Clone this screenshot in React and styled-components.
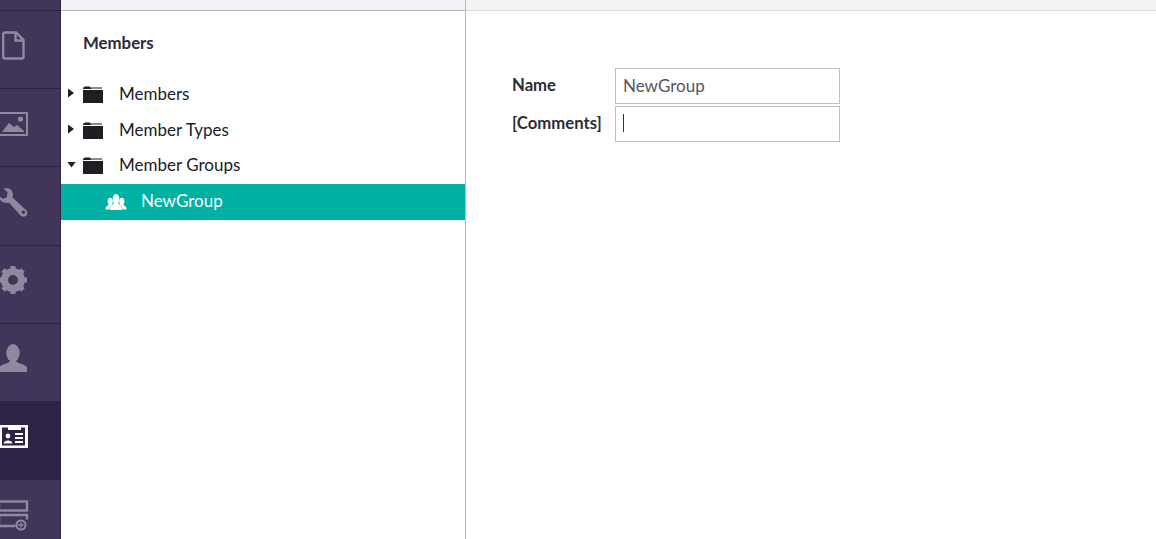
import React from 'react';
import styled, { createGlobalStyle } from 'styled-components';

const GlobalStyle = createGlobalStyle`
  html, body {
    margin: 0;
    padding: 0;
    height: 100%;
    overflow: hidden;
    background: #fff;
  }
  #root {
    height: 100%;
  }
`;

const Page = styled.div`
  display: flex;
  height: 539px;
  font-family: Lato, "Open Sans", sans-serif;
  color: #1b1b2b;
`;

const Sidebar = styled.nav`
  width: 60px;
  flex: none;
  background: #413659;
  border-right: 1px solid #2e2246;
  overflow: hidden;
`;

const SidebarStub = styled.div`
  height: 10px;
`;

// icons sit a bit above the middle of each tile
const SidebarItem = styled.div`
  height: 77.2px;
  box-sizing: content-box;
  border-top: 1px solid #2e2246;
  display: flex;
  align-items: center;
  padding-left: ${(p) => p.$left || 0}px;
  background: ${(p) => (p.$active ? '#2e2246' : 'transparent')};
  color: ${(p) => (p.$active ? '#fff' : '#8f89a0')};

  svg {
    margin-top: -8px;
    overflow: visible;
  }
`;

const TreePanel = styled.aside`
  width: 404px;
  flex: none;
  border-right: 1px solid #b8b6c0;
  display: flex;
  flex-direction: column;
`;

const TopStrip = styled.div`
  height: 10px;
  flex: none;
  background: #f3f3f5;
  border-bottom: 1px solid ${(p) => p.$line};
`;

const TreeTitle = styled.h2`
  margin: 0;
  padding: 22px 0 0 22px;
  font-size: 16.8px;
  line-height: 20px;
  font-weight: 700;
  color: #2b2b38;
`;

const Tree = styled.ul`
  list-style: none;
  margin: 22px 0 0;
  padding: 0;
`;

const TreeRow = styled.li`
  display: flex;
  align-items: center;
  height: ${(p) => p.$height}px;
  font-size: 17px;
  color: #1b1b2b;
`;

const Caret = styled.span`
  flex: none;
  background: #1f1f23;
  ${(p) =>
    p.$open
      ? `width: 9px;
         height: 6px;
         margin: 0 7px 0 6px;
         clip-path: polygon(0 0, 100% 0, 50% 100%);`
      : `width: 6px;
         height: 9px;
         margin: 0 9px 0 7px;
         clip-path: polygon(0 0, 100% 50%, 0 100%);`}
`;

const FolderIcon = styled.svg`
  width: 20px;
  height: 17px;
  flex: none;
  margin: 2px 16px 0 0;
`;

const ActiveRow = styled.div`
  display: flex;
  align-items: center;
  height: 36px;
  box-sizing: border-box;
  margin-top: 2px;
  padding: 0 0 3px 44px;
  background: #00b0a3;
  color: #fff;
  font-size: 17px;
`;

const GroupIcon = styled.svg`
  width: 22px;
  height: 18px;
  flex: none;
  margin: 3px 14px 0 0;
`;

const Main = styled.main`
  flex: 1;
  display: flex;
  flex-direction: column;
`;

const Form = styled.form`
  display: grid;
  grid-template-columns: 103px 225px;
  grid-auto-rows: 36px;
  row-gap: 2px;
  margin: 57px 0 0 46px;
`;

const Label = styled.label`
  font-size: 16.7px;
  line-height: 20px;
  padding-top: 7px;
  font-weight: 700;
  color: #2b2b38;
  white-space: nowrap;
`;

const Field = styled.div`
  height: 36px;
  box-sizing: border-box;
  border: 1px solid #bfbec6;
  padding: 0 7px 2px;
  display: flex;
  align-items: center;
  font-size: 17px;
  color: #55555f;
`;

const Cursor = styled.span`
  width: 1px;
  height: 18px;
  background: #33333d;
`;

function Folder() {
  return (
    <FolderIcon viewBox="0 0 20 17">
      <path d="M8 1 H19 V3 H8 Z" fill="#8a8a8a" />
      <path d="M0 3 Q0 0.5 2 0.5 H7 L8.5 3 H0 Z" fill="#1f1f23" />
      <rect x="0" y="4" width="20" height="13" fill="#1f1f23" />
    </FolderIcon>
  );
}

const rows = [
  { label: 'Members', height: 36 },
  { label: 'Member Types', height: 36 },
  { label: 'Member Groups', height: 35, open: true },
];

export default function App() {
  return (
    <Page>
      <GlobalStyle />
      <Sidebar>
        <SidebarStub />
        <SidebarItem $left={2}>
          <svg width="23" height="29" viewBox="0 0 23 29" fill="none" stroke="currentColor" strokeWidth="2.4">
            <path d="M3 1.5 H14 L21.5 9 V25.5 Q21.5 27.5 19.5 27.5 H3 Q1.2 27.5 1.2 25.5 V3.5 Q1.2 1.5 3 1.5 Z" />
            <path d="M13.5 1.5 V9.5 H21.5" />
          </svg>
        </SidebarItem>
        <SidebarItem>
          <svg width="28" height="24" viewBox="0 0 28 24">
            <rect x="-1" y="1" width="28" height="22" fill="none" stroke="currentColor" strokeWidth="2" />
            <circle cx="20.5" cy="7" r="2.6" fill="currentColor" />
            <path d="M2 20 L9 11 L14 15 L17 13 L24 19 V20 Z" fill="currentColor" />
          </svg>
        </SidebarItem>
        <SidebarItem>
          <svg width="28" height="30" viewBox="0 0 28 30" fill="currentColor">
            <path
              fillRule="evenodd"
              d="M-1 9 L3 12 L7 10 L7.5 5 L3.5 2 C8 0 13 2.5 13 8 L12.5 10.5 L26 23 C28 25 27.5 27.5 26 28.7 C24.5 30 22 30 20.5 28.5 L9 15.5 C4 17 -1 14 -1 9 Z M23.5 23.5 a1.7 1.7 0 1 0 0.01 0 Z"
            />
          </svg>
        </SidebarItem>
        <SidebarItem>
          <svg width="28" height="30" viewBox="0 0 28 30">
            <circle cx="13" cy="15" r="8.5" fill="none" stroke="currentColor" strokeWidth="7" />
            <path
              d="M13 1 V5 M13 25 V29 M-1 15 H3 M23 15 H27 M3 5 L6 8 M23 5 L20 8 M3 25 L6 22 M23 25 L20 22"
              stroke="currentColor"
              strokeWidth="5"
            />
          </svg>
        </SidebarItem>
        <SidebarItem>
          <svg width="28" height="28" viewBox="0 0 28 28" fill="currentColor">
            <ellipse cx="13" cy="9" rx="6.7" ry="9" />
            <path d="M-1 28 V23 C2 20 8 20 10 17 H16 C18 20 25 20 27 23 V28 Z" />
          </svg>
        </SidebarItem>
        <SidebarItem $active>
          <svg width="28" height="23" viewBox="0 0 28 23">
            <rect x="-1" y="0" width="29" height="23" fill="#fff" />
            <rect x="2" y="2.5" width="23" height="18" fill="#2e2246" />
            <rect x="8" y="0" width="13" height="5" fill="#fff" />
            <circle cx="8" cy="11" r="2.4" fill="#fff" />
            <path d="M3.5 18.5 C4 14.5 12 14.5 12.5 18.5 Z" fill="#fff" />
            <path d="M15 8 H23 V10 H15 Z M15 12 H23 V14 H15 Z M15 16 H23 V18 H15 Z" fill="#fff" />
          </svg>
        </SidebarItem>
        <SidebarItem>
          <svg width="28" height="28" viewBox="0 0 28 28" fill="none" stroke="currentColor" strokeWidth="2.4">
            <rect x="-1" y="0.5" width="28" height="9" />
            <path d="M15.5 25 H-1 V14 H27 V18.5" />
            <circle cx="21" cy="24" r="4.5" strokeWidth="2" />
            <path d="M21 21.5 V26.5 M18.5 24 H23.5" strokeWidth="1.4" />
          </svg>
        </SidebarItem>
      </Sidebar>

      <TreePanel>
        <TopStrip $line="#b8b6c0" />
        <TreeTitle>Members</TreeTitle>
        <Tree>
          {rows.map((row) => (
            <TreeRow key={row.label} $height={row.height}>
              <Caret $open={row.open} />
              <Folder />
              {row.label}
            </TreeRow>
          ))}
        </Tree>
        <ActiveRow>
          <GroupIcon viewBox="0 0 22 18" fill="#fff">
            <ellipse cx="11" cy="6" rx="3.4" ry="5" />
            <ellipse cx="5.2" cy="8.5" rx="2.6" ry="3.7" />
            <ellipse cx="16.8" cy="8.5" rx="2.6" ry="3.7" />
            <path d="M5 15 C5.5 12 8 11.5 9 10 H13 C14 11.5 16.5 12 17 15 V17 H5 Z" />
            <path d="M0.5 16.5 V15 C1.5 13 3 12.5 4 11.5 H7 L5 13.5 L4.5 16.5 Z M21.5 16.5 V15 C20.5 13 19 12.5 18 11.5 H15 L17 13.5 L17.5 16.5 Z" />
          </GroupIcon>
          NewGroup
        </ActiveRow>
      </TreePanel>

      <Main>
        <TopStrip $line="#dcdce1" />
        <Form>
          <Label>Name</Label>
          <Field>NewGroup</Field>
          <Label>[Comments]</Label>
          <Field>
            <Cursor />
          </Field>
        </Form>
      </Main>
    </Page>
  );
}
